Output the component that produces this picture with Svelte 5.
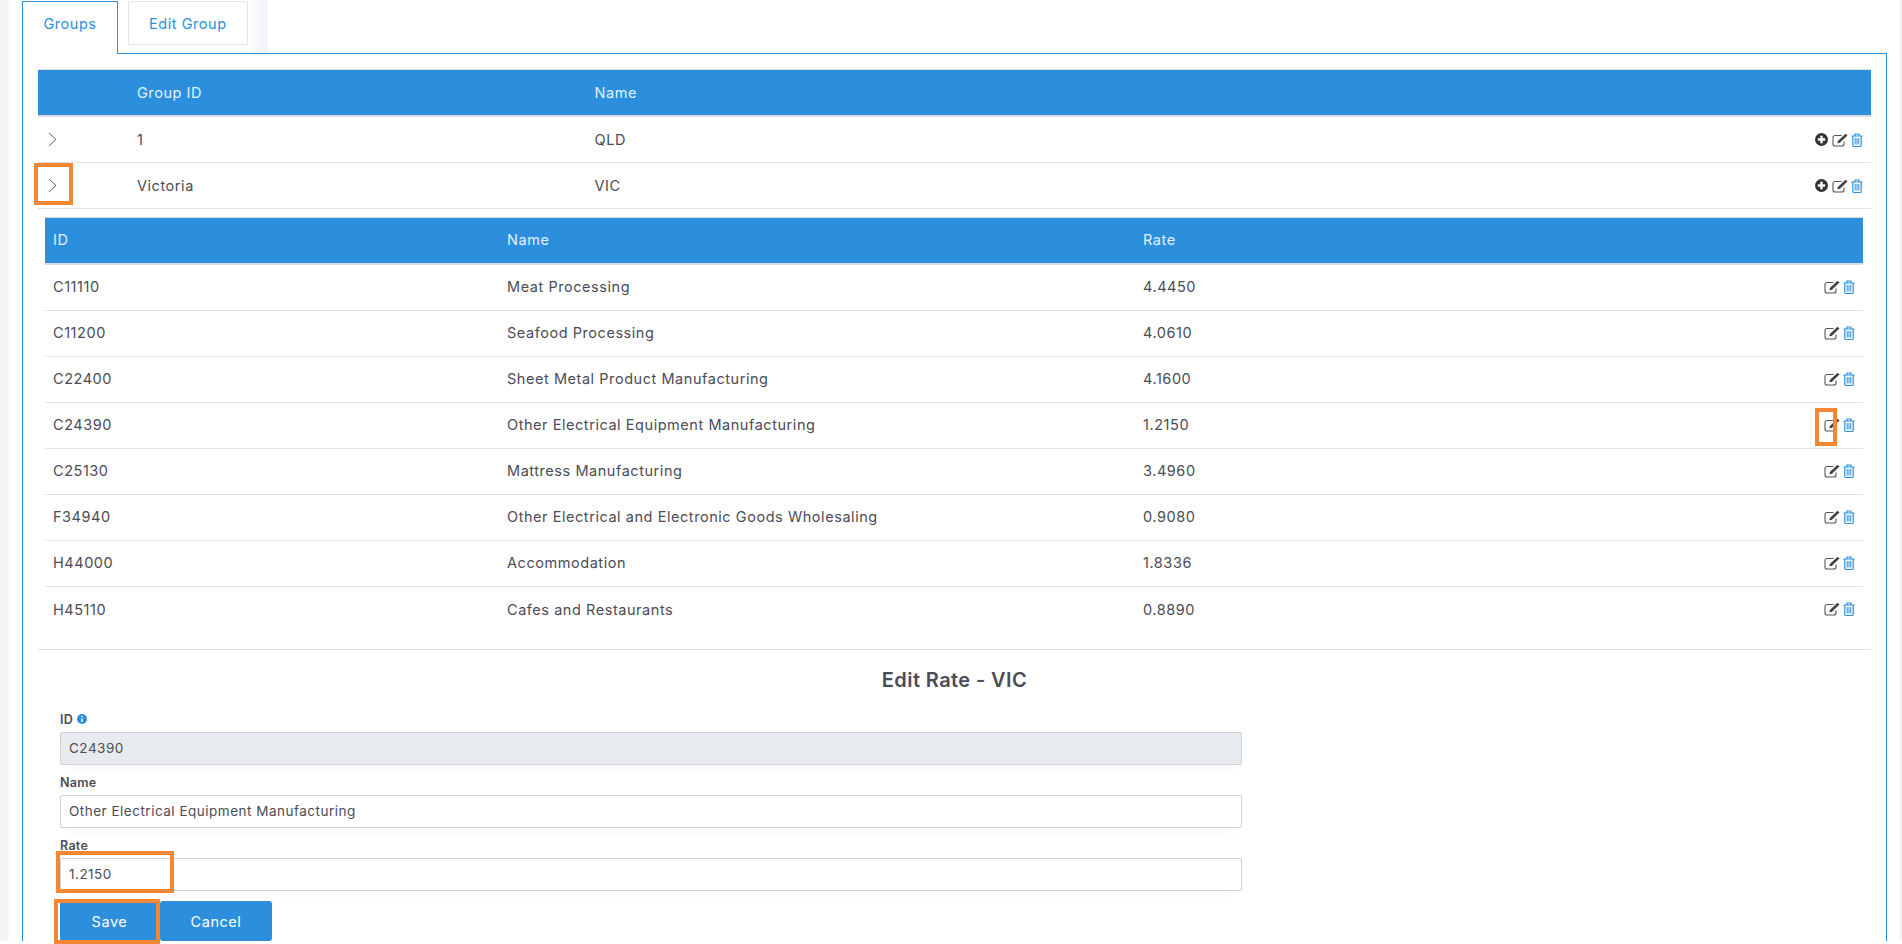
<script>
  const groups = [
    { id: '1', name: 'QLD' },
    { id: 'Victoria', name: 'VIC' }
  ];
  const rates = [
    ['C11110', 'Meat Processing', '4.4450'],
    ['C11200', 'Seafood Processing', '4.0610'],
    ['C22400', 'Sheet Metal Product Manufacturing', '4.1600'],
    ['C24390', 'Other Electrical Equipment Manufacturing', '1.2150'],
    ['C25130', 'Mattress Manufacturing', '3.4960'],
    ['F34940', 'Other Electrical and Electronic Goods Wholesaling', '0.9080'],
    ['H44000', 'Accommodation', '1.8336'],
    ['H45110', 'Cafes and Restaurants', '0.8890']
  ];
</script>

{#snippet plus()}
  <svg class="icon plus" viewBox="0 0 13 13"><circle cx="6.5" cy="6.5" r="6.5" fill="#333" /><path d="M6.500 2.800v7.400M2.800 6.500h7.400" stroke="#fff" stroke-width="2.400" /></svg>
{/snippet}
{#snippet edit()}
  <svg class="icon pen" viewBox="0 0 16 14"><path d="M12 8.500V11a2 2 0 0 1-2 2H3a2 2 0 0 1-2-2V4.500a2 2 0 0 1 2-2h6.500" fill="none" stroke="#555" stroke-width="1.100" /><path d="M5.800 8 5.400 10.300l2.300-.4L15.500 2.600 13.500.7z" fill="#444" /></svg>
{/snippet}
{#snippet trash()}
  <svg class="icon bin" viewBox="0 0 12 14"><path d="M4 2.500V1h4v1.500M.5 3h11M1.800 3v9.300a1.200 1.200 0 0 0 1.200 1.200h6a1.200 1.200 0 0 0 1.200-1.200V3" fill="none" stroke="#2b8fde" stroke-width="1.200" /><path d="M4.200 5v6.500M6 5v6.500M7.800 5v6.500" stroke="#2b8fde" stroke-width="1" /></svg>
{/snippet}

<div class="page">
  <div class="tabs">
    <div class="tab active">Groups</div>
    <div class="tab">Edit Group</div>
  </div>

  <div class="panel">
    <div class="row head outer-cols">
      <span></span><span>Group ID</span><span>Name</span><span></span>
    </div>
    {#each groups as g}
      <div class="row outer-cols">
        <svg class="chev" viewBox="0 0 9 15"><path d="M1 1l7 6.500-7 6.500" fill="none" stroke="#555" stroke-width="0.9" /></svg>
        <span>{g.id}</span>
        <span>{g.name}</span>
        <span class="actions">{@render plus()}{@render edit()}{@render trash()}</span>
      </div>
    {/each}

    <div class="sub">
      <div class="row head sub-cols">
        <span>ID</span><span>Name</span><span>Rate</span><span></span>
      </div>
      {#each rates as r, i}
        <div class="row sub-cols" class:last={i === rates.length - 1}>
          <span>{r[0]}</span>
          <span>{r[1]}</span>
          <span>{r[2]}</span>
          <span class="actions">{@render edit()}{@render trash()}</span>
        </div>
      {/each}
    </div>

    <div class="edit">
      <h3>Edit Rate - VIC</h3>
      <div class="form">
        <label for="f-id">ID <svg class="info" viewBox="0 0 10 10"><circle cx="5" cy="5" r="5" fill="#2b8fde" /><path d="M5 2v1.200M5 4.400V8" stroke="#fff" stroke-width="1.500" /></svg></label>
        <input id="f-id" value="C24390" disabled />
        <label for="f-name">Name</label>
        <input id="f-name" value="Other Electrical Equipment Manufacturing" />
        <label for="f-rate">Rate</label>
        <input id="f-rate" value="1.2150" />
      </div>
      <div class="buttons">
        <button>Save</button>
        <button class="cancel">Cancel</button>
      </div>
    </div>
  </div>

  <div class="mark m1"></div>
  <div class="mark m2"></div>
  <div class="mark m3"></div>
  <div class="mark m4"></div>
</div>

<style>
  :global(body) {
    margin: 0;
    background: #fff;
    overflow: hidden;
  }
  .page {
    position: relative;
    box-sizing: border-box;
    width: 1902px;
    height: 944px;
    overflow: hidden;
    padding: 0 15px 0 22px;
    font-family: Inter, "Liberation Sans", sans-serif;
    font-size: 14.5px;
    letter-spacing: 0.55px;
    color: #4b4c57;
    background: linear-gradient(90deg, #f3f4f7 0 8px, #fff 9px, #fff 1899px, #f3f4f7 1900px) 0 0 / 100% 941px no-repeat;
  }
  .tabs {
    display: flex;
    gap: 10px;
    box-sizing: border-box;
    width: 246px;
    height: 53px;
    padding-top: 1px;
    position: relative;
    background: linear-gradient(90deg, #fff 226px, #f3f4f7 240px, #f3f4f7 245px, #fff 246px);
  }
  .tab {
    box-sizing: border-box;
    height: 44px;
    padding: 1px 20px 0;
    display: flex;
    align-items: center;
    border: 1px solid #e6e6e6;
    color: #2b8fde;
    background: #fff;
  }
  .tab.active {
    height: 53px;
    padding: 0 0 9px;
    width: 96px;
    justify-content: center;
    border-color: #2b8fde;
    border-bottom: 0;
    position: relative;
    z-index: 1;
  }
  .panel {
    box-sizing: border-box;
    height: 888px;
    border: 1px solid #2b8fde;
    border-bottom: 0;
    padding: 15px 15px 0;
  }
  .row {
    display: grid;
    align-items: center;
    height: 46px;
    box-sizing: border-box;
    border-bottom: 1px solid #e2e2e6;
  }
  .head {
    height: 48px;
    background: #2b8fde;
    color: #e4f1fb;
    border-top: 1px solid #dcdde2;
    border-bottom: 2px solid #dcdde2;
  }
  .outer-cols {
    grid-template-columns: 99px 457.5px 1fr 60px;
  }
  .outer-cols .chev {
    margin-left: 10px;
  }
  .chev {
    width: 9px;
    height: 15px;
  }
  .sub-cols {
    grid-template-columns: 454px 636px 1fr 60px;
    padding: 0 0 2px 8px;
  }
  .sub {
    margin: 8px 8px 0 7px;
  }
  .last {
    border-bottom: 0;
  }
  .actions {
    display: flex;
    justify-content: flex-end;
    align-items: center;
    gap: 3.5px;
    padding-right: 8px;
  }
  .icon {
    height: 14px;
    flex: none;
  }
  .plus {
    width: 13px;
    height: 13px;
  }
  .pen {
    width: 16px;
  }
  .bin {
    width: 12px;
  }
  .edit {
    margin-top: 16px;
    border-top: 1px solid #e2e2e2;
  }
  h3 {
    margin: 15px 0 15px;
    text-align: center;
    font-size: 20px;
    letter-spacing: 0.4px;
    line-height: 30px;
    font-weight: 600;
  }
  .form {
    width: 1182px;
    margin-left: 22px;
  }
  label {
    display: block;
    height: 20px;
    font-size: 12.5px;
    letter-spacing: 0.3px;
    font-weight: 600;
    line-height: 20px;
    margin-bottom: 2px;
    color: #4b4c57;
  }
  .info {
    width: 10px;
    height: 10px;
  }
  input {
    display: block;
    box-sizing: border-box;
    width: 100%;
    height: 33px;
    margin-bottom: 8px;
    padding: 0 8px 2px;
    border: 1px solid #cfd2da;
    border-radius: 2px;
    font-family: inherit;
    font-size: 13.5px;
    letter-spacing: 0.5px;
    color: #4b4c57;
    background: #fff;
    box-shadow: 0 8px 12px -6px rgba(0, 0, 0, 0.04);
  }
  input:disabled {
    background: #e8ebee;
  }
  .buttons {
    display: flex;
    margin-left: 22px;
    margin-top: 10px;
  }
  button {
    width: 99px;
    height: 40px;
    padding: 0;
    border: 0;
    border-radius: 3px;
    background: #2b8fde;
    color: #fff;
    font: inherit;
    letter-spacing: inherit;
    margin-right: 1px;
  }
  .cancel {
    width: 112px;
  }
  .mark {
    position: absolute;
    box-sizing: border-box;
    border: 4px solid #f58634;
  }
  .m1 { left: 34px; top: 163px; width: 39px; height: 42px; }
  .m2 { left: 1815px; top: 408px; width: 22px; height: 38px; }
  .m3 { left: 56px; top: 851px; width: 118px; height: 42px; }
  .m4 { left: 54px; top: 899px; width: 106px; height: 45px; }
</style>
